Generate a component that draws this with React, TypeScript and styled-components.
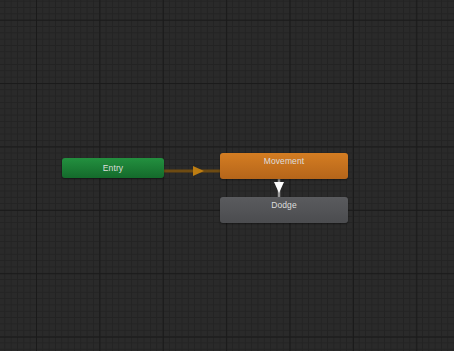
import React from "react";
import styled, { createGlobalStyle } from "styled-components";

const Global = createGlobalStyle`
  html, body { margin: 0; padding: 0; background: #282828; }
  #root { width: 454px; height: 351px; }
`;

const MAJOR = 63.4;
const MINOR = MAJOR / 10;

const Canvas = styled.div`
  position: relative;
  width: 454px;
  height: 351px;
  overflow: hidden;
  background-color: #2a2a2a;
  background-image:
    linear-gradient(to right, #1a1a1a 0 1px, transparent 1px),
    linear-gradient(to bottom, #1a1a1a 0 1px, transparent 1px),
    linear-gradient(to right, #232323 0 1px, transparent 1px),
    linear-gradient(to bottom, #232323 0 1px, transparent 1px);
  background-size:
    ${MAJOR}px ${MAJOR}px,
    ${MAJOR}px ${MAJOR}px,
    ${MINOR}px ${MINOR}px,
    ${MINOR}px ${MINOR}px;
  background-position:
    36px 19.7px,
    36px 19.7px,
    36px 19.7px,
    36px 19.7px;
  font-family: "Liberation Sans", Arial, sans-serif;
`;

type Kind = "entry" | "state" | "default";

const fills: Record<Kind, string> = {
  entry: "linear-gradient(to bottom, #23903f, #146a2b)",
  default: "linear-gradient(to bottom, #d47d22, #b5651a)",
  state: "linear-gradient(to bottom, #5a5b5e, #4b4c4f)",
};

const Node = styled.div<{ $kind: Kind; $x: number; $y: number; $w: number; $h: number }>`
  position: absolute;
  left: ${(p) => p.$x}px;
  top: ${(p) => p.$y}px;
  width: ${(p) => p.$w}px;
  height: ${(p) => p.$h}px;
  box-sizing: border-box;
  border-radius: 3px;
  background: ${(p) => fills[p.$kind]};
  box-shadow: 0 1px 2px rgba(0, 0, 0, 0.45);
  display: flex;
  justify-content: center;
  align-items: ${(p) => (p.$kind === "entry" ? "center" : "flex-start")};
  padding-top: ${(p) => (p.$kind === "entry" ? 0 : 3)}px;
`;

const Label = styled.span`
  font-size: 8.5px;
  color: #dedede;
  line-height: 11px;
  letter-spacing: 0.1px;
`;

const Edges = styled.svg`
  position: absolute;
  left: 0;
  top: 0;
  width: 454px;
  height: 351px;
  pointer-events: none;
`;

export default function App() {
  return (
    <>
      <Global />
      <Canvas>
        <Edges viewBox="0 0 454 351">
          <line x1="164" y1="171" x2="221" y2="171" stroke="#6e4b12" strokeWidth="3" />
          <polygon points="193,166 204,171 193,176" fill="#bd7d12" />
          <line x1="279" y1="178" x2="279" y2="198" stroke="#9a9a9a" strokeWidth="2.5" />
        </Edges>
        <Node $kind="entry" $x={62} $y={158} $w={102} $h={20}>
          <Label>Entry</Label>
        </Node>
        <Node $kind="default" $x={220} $y={153} $w={128} $h={26}>
          <Label>Movement</Label>
        </Node>
        <Node $kind="state" $x={220} $y={197} $w={128} $h={26}>
          <Label>Dodge</Label>
        </Node>
        <Edges viewBox="0 0 454 351">
          <polygon points="274,182 284,182 279,193" fill="#ffffff" />
        </Edges>
      </Canvas>
    </>
  );
}
